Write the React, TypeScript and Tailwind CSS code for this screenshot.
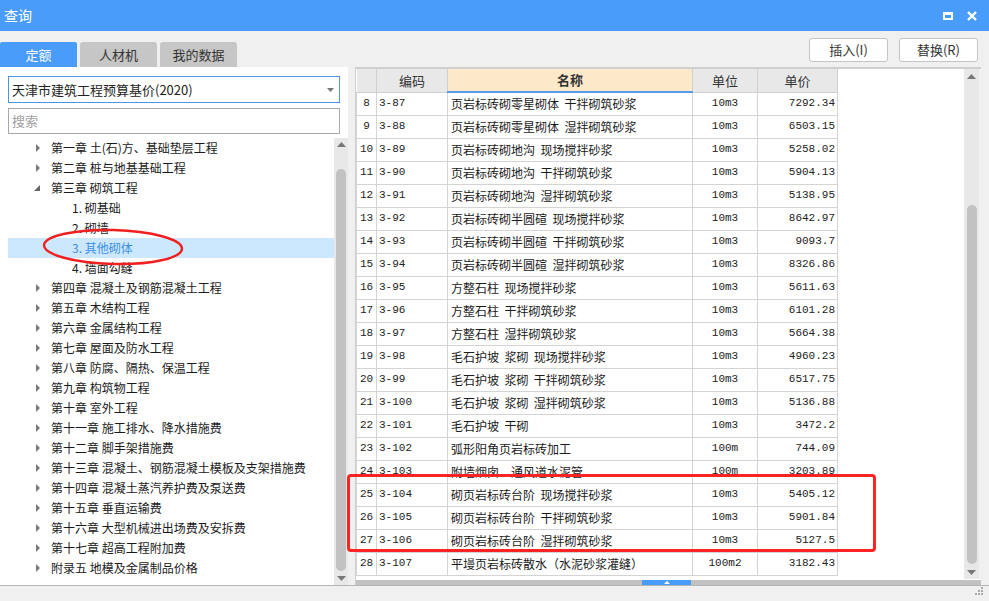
import React from "react";

const CJK = { fontFamily: '"Noto Sans CJK SC", "Noto Sans", sans-serif' };
const MONO = { fontFamily: '"Liberation Mono", "DejaVu Sans Mono", monospace' };

const before = ["第一章 土(石)方、基础垫层工程", "第二章 桩与地基基础工程"];
const children = ["1. 砌基础", "2. 砌墙", "3. 其他砌体", "4. 墙面勾缝"];
const after = [
  "第四章 混凝土及钢筋混凝土工程",
  "第五章 木结构工程",
  "第六章 金属结构工程",
  "第七章 屋面及防水工程",
  "第八章 防腐、隔热、保温工程",
  "第九章 构筑物工程",
  "第十章 室外工程",
  "第十一章 施工排水、降水措施费",
  "第十二章 脚手架措施费",
  "第十三章 混凝土、钢筋混凝土模板及支架措施费",
  "第十四章 混凝土蒸汽养护费及泵送费",
  "第十五章 垂直运输费",
  "第十六章 大型机械进出场费及安拆费",
  "第十七章 超高工程附加费",
  "附录五 地模及金属制品价格",
];

const rows: [number, string, string, string, string][] = [
  [8, "3-87", "页岩标砖砌零星砌体  干拌砌筑砂浆", "10m3", "7292.34"],
  [9, "3-88", "页岩标砖砌零星砌体  湿拌砌筑砂浆", "10m3", "6503.15"],
  [10, "3-89", "页岩标砖砌地沟  现场搅拌砂浆", "10m3", "5258.02"],
  [11, "3-90", "页岩标砖砌地沟  干拌砌筑砂浆", "10m3", "5904.13"],
  [12, "3-91", "页岩标砖砌地沟  湿拌砌筑砂浆", "10m3", "5138.95"],
  [13, "3-92", "页岩标砖砌半圆碹  现场搅拌砂浆", "10m3", "8642.97"],
  [14, "3-93", "页岩标砖砌半圆碹  干拌砌筑砂浆", "10m3", "9093.7"],
  [15, "3-94", "页岩标砖砌半圆碹  湿拌砌筑砂浆", "10m3", "8326.86"],
  [16, "3-95", "方整石柱  现场搅拌砂浆", "10m3", "5611.63"],
  [17, "3-96", "方整石柱  干拌砌筑砂浆", "10m3", "6101.28"],
  [18, "3-97", "方整石柱  湿拌砌筑砂浆", "10m3", "5664.38"],
  [19, "3-98", "毛石护坡  浆砌  现场搅拌砂浆", "10m3", "4960.23"],
  [20, "3-99", "毛石护坡  浆砌  干拌砌筑砂浆", "10m3", "6517.75"],
  [21, "3-100", "毛石护坡  浆砌  湿拌砌筑砂浆", "10m3", "5136.88"],
  [22, "3-101", "毛石护坡  干砌", "10m3", "3472.2"],
  [23, "3-102", "弧形阳角页岩标砖加工", "100m", "744.09"],
  [24, "3-103", "附墙烟囱、通风道水泥管", "100m", "3203.89"],
  [25, "3-104", "砌页岩标砖台阶  现场搅拌砂浆", "10m3", "5405.12"],
  [26, "3-105", "砌页岩标砖台阶  干拌砌筑砂浆", "10m3", "5901.84"],
  [27, "3-106", "砌页岩标砖台阶  湿拌砌筑砂浆", "10m3", "5127.5"],
  [28, "3-107", "平墁页岩标砖散水（水泥砂浆灌缝）", "100m2", "3182.43"],
];

function Arrow({ open }: { open?: boolean }) {
  return (
    <svg width="8" height="8" viewBox="0 0 8 8" className="shrink-0">
      {open ? <polygon points="6,1 6,7 0,7" fill="#666" /> : <polygon points="2,0 6,4 2,8" fill="#777" />}
    </svg>
  );
}

function ChapterRow({ text }: { text: string }) {
  return (
    <div className="h-[20px] flex items-center pl-[26px] gap-[9px] text-[12px] text-[#1a1a1a] whitespace-nowrap">
      <Arrow />
      <span>{text}</span>
    </div>
  );
}

export default function App() {
  return (
    <div className="w-[989px] h-[601px] bg-[#f0f0f0] flex flex-col relative overflow-hidden" style={CJK}>
      {/* title bar */}
      <div className="h-[31px] bg-[#4a9cfa] flex items-center justify-between pl-[4px] pr-[12px] shrink-0">
        <span className="text-white text-[14px]">查询</span>
        <div className="flex items-center gap-[14px]">
          <div className="w-[10px] h-[8px] border-[2px] border-t-[3px] border-white" />
          <svg width="10" height="10" viewBox="0 0 10 10">
            <path d="M1 1 L9 9 M9 1 L1 9" stroke="white" strokeWidth="2.4" />
          </svg>
        </div>
      </div>

      {/* tabs + buttons */}
      <div className="h-[36px] flex items-end justify-between shrink-0 pr-[11px]">
        <div className="flex items-end gap-[2px]">
          <div className="w-[77px] h-[25px] bg-[#4a9cfa] rounded-t-[2px] flex items-center justify-center text-white text-[13px]">定额</div>
          <div className="w-[77px] h-[25px] bg-[#c6c6c6] rounded-t-[3px] ml-[1px] flex items-center justify-center text-[#333] text-[13px]">人材机</div>
          <div className="w-[77px] h-[25px] bg-[#c6c6c6] rounded-t-[3px] ml-[1px] flex items-center justify-center text-[#333] text-[13px]">我的数据</div>
        </div>
        <div className="flex items-center gap-[11px] mb-[5px]">
          <button className="w-[79px] h-[24px] bg-white border border-[#c4c4c4] rounded-[3px] text-[13px] text-[#333]">插入(I)</button>
          <button className="w-[79px] h-[24px] bg-white border border-[#c4c4c4] rounded-[3px] text-[13px] text-[#333]">替换(R)</button>
        </div>
      </div>

      {/* main */}
      <div className="flex flex-1 min-h-0">
        {/* left panel */}
        <div className="w-[348px] bg-white flex flex-col pt-[9px] shrink-0">
          <div className="mx-[8px] h-[27px] border border-[#4a95e8] flex items-center justify-between pl-[3px] pr-[5px]">
            <span className="text-[13px] text-[#222]">天津市建筑工程预算基价(2020)</span>
            <svg width="7" height="4" viewBox="0 0 7 4"><polygon points="0,0 7,0 3.5,4" fill="#777" /></svg>
          </div>
          <div className="mx-[8px] mt-[5px] h-[26px] border border-[#a9a9a9] flex items-center pl-[3px]">
            <span className="text-[13px] text-[#a0a0a0]">搜索</span>
          </div>
          <div className="flex flex-1 min-h-0 mt-[4px] pl-[8px]">
            <div className="flex-1 relative">
              {before.map((t) => (
                <ChapterRow key={t} text={t} />
              ))}
              <div className="h-[20px] flex items-center pl-[26px] gap-[9px] text-[12px] text-[#1a1a1a]">
                <Arrow open />
                <span>第三章 砌筑工程</span>
              </div>
              {children.map((t, i) => (
                <div
                  key={t}
                  className={
                    i === 2
                      ? "h-[20px] flex items-center pl-[64px] text-[12px] text-[#3d8fe6] bg-[#cce8ff]"
                      : "h-[20px] flex items-center pl-[64px] text-[12px] text-[#1a1a1a]"
                  }
                >
                  {t}
                </div>
              ))}
              {after.map((t) => (
                <ChapterRow key={t} text={t} />
              ))}
              <svg className="absolute left-[32px] top-[89px]" width="146" height="42" viewBox="0 0 146 42">
                <ellipse cx="73" cy="20" rx="69" ry="17" fill="none" stroke="#f02020" strokeWidth="2.5" transform="rotate(1.5 73 20)" />
              </svg>
            </div>
            {/* left scrollbar */}
            <div className="w-[14px] bg-[#e8e8e8] flex flex-col items-center pt-[4px] pb-[4px]">
              <svg width="9" height="5" viewBox="0 0 9 5"><polygon points="0,5 9,5 4.5,0" fill="#777" /></svg>
              <div className="w-[10px] flex-1 bg-[#c2c2c2] rounded-[5px] mt-[22px] mb-[5px]" />
              <svg width="9" height="5" viewBox="0 0 9 5"><polygon points="0,0 9,0 4.5,5" fill="#777" /></svg>
            </div>
          </div>
        </div>

        {/* right panel */}
        <div className="w-[626px] ml-[7px] border-t-[2px] border-l border-[#cfcfcf] flex flex-col bg-white">
          <div className="flex flex-1 min-h-0">
            <div className="flex-1 relative">
              <table className="border-collapse table-fixed" style={{ width: 481 }}>
                <colgroup>
                  <col style={{ width: 20 }} />
                  <col style={{ width: 71 }} />
                  <col style={{ width: 245 }} />
                  <col style={{ width: 65 }} />
                  <col style={{ width: 80 }} />
                </colgroup>
                <thead>
                  <tr className="h-[23px]">
                    <th className="bg-[#e8e8e8] border-r border-b border-[#d0d0d0]" />
                    <th className="bg-[#e8e8e8] border-r border-b border-[#d0d0d0] text-[13px] font-normal text-[#333]">编码</th>
                    <th className="bg-[#fde8c9] border-r border-b-2 border-b-[#5a9be6] border-r-[#d0d0d0] text-[13px] font-bold text-[#333]">名称</th>
                    <th className="bg-[#e8e8e8] border-r border-b border-[#d0d0d0] text-[13px] font-normal text-[#333]">单位</th>
                    <th className="bg-[#e8e8e8] border-r border-b border-[#d0d0d0] text-[13px] font-normal text-[#333]">单价</th>
                  </tr>
                </thead>
                <tbody>
                  {rows.map((r) => (
                    <tr key={r[0]} className="h-[23px]">
                      <td className="border border-[#d4d4d4] text-center text-[11px] text-[#222] p-0" style={MONO}>{r[0]}</td>
                      <td className="border border-[#d4d4d4] pl-[2px] text-[11px] text-[#222] whitespace-nowrap" style={MONO}>{r[1]}</td>
                      <td className="border border-[#d4d4d4] pl-[3px] text-[12px] text-[#1a1a1a] whitespace-pre overflow-hidden">{r[2]}</td>
                      <td className="border border-[#d4d4d4] text-center text-[11px] text-[#222]" style={MONO}>{r[3]}</td>
                      <td className="border border-[#d4d4d4] text-right pr-[2px] text-[11px] text-[#222]" style={MONO}>{r[4]}</td>
                    </tr>
                  ))}
                </tbody>
              </table>
            </div>
            {/* right vertical scrollbar */}
            <div className="w-[15px] bg-[#e8e8e8] flex flex-col items-center pt-[5px] pb-[4px]">
              <svg width="9" height="5" viewBox="0 0 9 5"><polygon points="0,5 9,5 4.5,0" fill="#777" /></svg>
              <div className="w-[10px] flex-1 bg-[#c2c2c2] rounded-[5px] mt-[126px] mb-[6px]" />
              <svg width="9" height="5" viewBox="0 0 9 5"><polygon points="0,0 9,0 4.5,5" fill="#777" /></svg>
            </div>
            <div className="w-[2px] bg-[#f0f0f0]" />
          </div>
          <div className="h-[5px] flex mt-[1px]">
            <div className="w-[286px] bg-[#c2c2c2]" />
            <div className="w-[49px] bg-[#4a9cfa] flex items-center justify-center">
              <svg width="6" height="3" viewBox="0 0 6 3"><polygon points="0,3 6,3 3,0" fill="white" /></svg>
            </div>
            <div className="flex-1 bg-[#c2c2c2]" />
          </div>
        </div>
        <div className="flex-1" />
      </div>

      {/* bottom status */}
      <div className="h-[16px] border-t border-[#b4b4b4] bg-[#f0f0f0] shrink-0 relative">
        <svg className="absolute right-[5px] top-[0px]" width="10" height="10" viewBox="0 0 10 10">
          <rect x="7" y="1" width="2" height="2" fill="#aaa" />
          <rect x="4" y="4" width="2" height="2" fill="#aaa" />
          <rect x="7" y="4" width="2" height="2" fill="#aaa" />
          <rect x="1" y="7" width="2" height="2" fill="#aaa" />
          <rect x="4" y="7" width="2" height="2" fill="#aaa" />
          <rect x="7" y="7" width="2" height="2" fill="#aaa" />
        </svg>
      </div>

      {/* red highlight rectangle */}
      <div className="absolute left-[347px] top-[474px] w-[529px] h-[78px] border-[3px] border-[#ff2424] rounded-[4px] pointer-events-none" />
    </div>
  );
}
